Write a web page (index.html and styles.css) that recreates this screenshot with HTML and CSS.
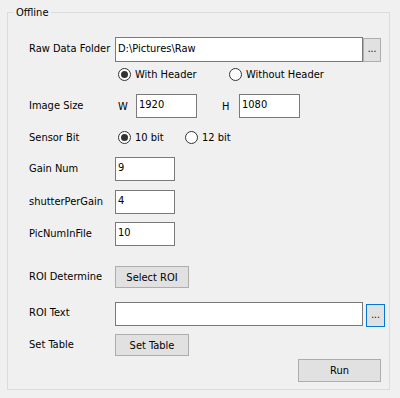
FILE: index.html
```html
<!DOCTYPE html>
<html>
<head>
<meta charset="utf-8">
<link rel="stylesheet" href="styles.css">
</head>
<body>
<fieldset class="group">
  <legend class="group-title">Offline</legend>
  <div class="form">
    <div class="row r1">
      <span class="label">Raw Data Folder</span>
      <div class="text wide">D:\Pictures\Raw</div>
      <div class="btn browse">...</div>
    </div>
    <div class="row r2">
      <span class="label"></span>
      <span class="radio opt-header"><span class="dot checked"></span>With Header</span>
      <span class="radio"><span class="dot"></span>Without Header</span>
    </div>
    <div class="row r3">
      <span class="label">Image Size</span>
      <span class="dim dim-w">W</span>
      <div class="text small">1920</div>
      <span class="dim dim-h">H</span>
      <div class="text small">1080</div>
    </div>
    <div class="row r4">
      <span class="label">Sensor Bit</span>
      <span class="radio opt-bit"><span class="dot checked"></span>10 bit</span>
      <span class="radio"><span class="dot"></span>12 bit</span>
    </div>
    <div class="row r5">
      <span class="label">Gain Num</span>
      <div class="text num">9</div>
    </div>
    <div class="row r6">
      <span class="label">shutterPerGain</span>
      <div class="text num">4</div>
    </div>
    <div class="row r7">
      <span class="label">PicNumInFile</span>
      <div class="text num">10</div>
    </div>
    <div class="row r8">
      <span class="label">ROI Determine</span>
      <div class="btn action">Select ROI</div>
    </div>
    <div class="row r9">
      <span class="label">ROI Text</span>
      <div class="text wide"></div>
      <div class="btn browse focus">...</div>
    </div>
    <div class="row r10">
      <span class="label">Set Table</span>
      <div class="btn action">Set Table</div>
    </div>
    <div class="row r11">
      <div class="btn run">Run</div>
    </div>
  </div>
</fieldset>
</body>
</html>
```
FILE: styles.css
```css
html, body {
  margin: 0;
  padding: 0;
  background: #f0f0f0;
}
body {
  font-family: "DejaVu Sans Condensed", "DejaVu Sans", sans-serif;
  font-size: 11px;
  color: #000;
  width: 400px;
  height: 398px;
  overflow: hidden;
}
.group {
  margin: 6px 0 0 7px;
  padding: 0;
  width: 383px;
  height: 384px;
  box-sizing: border-box;
  border: 1px solid #dcdcdc;
  border-radius: 0;
}
.group-title {
  padding: 0 3px;
  margin-left: 5px;
  line-height: 13px;
}
.form {
  display: flex;
  flex-direction: column;
  padding-left: 21px;
}
.row {
  display: flex;
  align-items: center;
}
.label {
  width: 86px;
  flex: none;
  margin-top: -2px;
}
.r1 { margin-top: 18px; height: 25px; }
.r2 { margin-top: 2px; height: 22px; }
.r3 { margin-top: 8px; height: 24px; }
.r4 { margin-top: 9px; height: 22px; }
.r5 { margin-top: 8px; height: 24px; }
.r6 { margin-top: 9px; height: 24px; }
.r7 { margin-top: 8px; height: 24px; }
.r8 { margin-top: 20px; height: 22px; }
.r9 { margin-top: 14px; height: 25px; align-items: flex-start; }
.r9 .label { margin-top: 4px; }
.r10 { margin-top: 7px; height: 22px; }
.r11 { margin-top: 3px; height: 23px; justify-content: flex-end; padding-right: 8px; }

.text {
  box-sizing: border-box;
  background: #fff;
  border: 1px solid #7a7a7a;
  padding: 0 2px;
  display: flex;
  align-items: center;
  padding-bottom: 3px;
}
.wide { width: 248px; height: 25px; }
.r9 .wide { height: 24px; }
.small { width: 61px; height: 24px; }
.num { width: 60px; height: 24px; }

.btn {
  box-sizing: border-box;
  background: #e1e1e1;
  border: 1px solid #adadad;
  display: flex;
  align-items: center;
  justify-content: center;
}
.browse {
  width: 18px;
  height: 24px;
  font-size: 10px;
  padding-bottom: 2px;
}
.r9 .browse {
  width: 19px;
  height: 23px;
  margin-left: 3px;
  margin-top: 2px;
}
.focus { border-color: #0078d7; }
.action { width: 74px; height: 22px; }
.run { width: 83px; height: 23px; }

.radio {
  display: flex;
  align-items: center;
  margin-top: -2px;
}
.dot {
  box-sizing: border-box;
  width: 13px;
  height: 13px;
  border: 1px solid #333;
  border-radius: 50%;
  background: #fff;
  margin-right: 4px;
  display: flex;
  align-items: center;
  justify-content: center;
}
.dot.checked::after {
  content: "";
  width: 7px;
  height: 7px;
  border-radius: 50%;
  background: #333;
}
.opt-header { margin-left: 3px; width: 111px; }
.opt-bit { margin-left: 3px; width: 67px; }

.dim { display: block; }
.dim-w { margin-left: 3px; width: 18px; }
.dim-h { margin-left: 25px; width: 17px; }
```
